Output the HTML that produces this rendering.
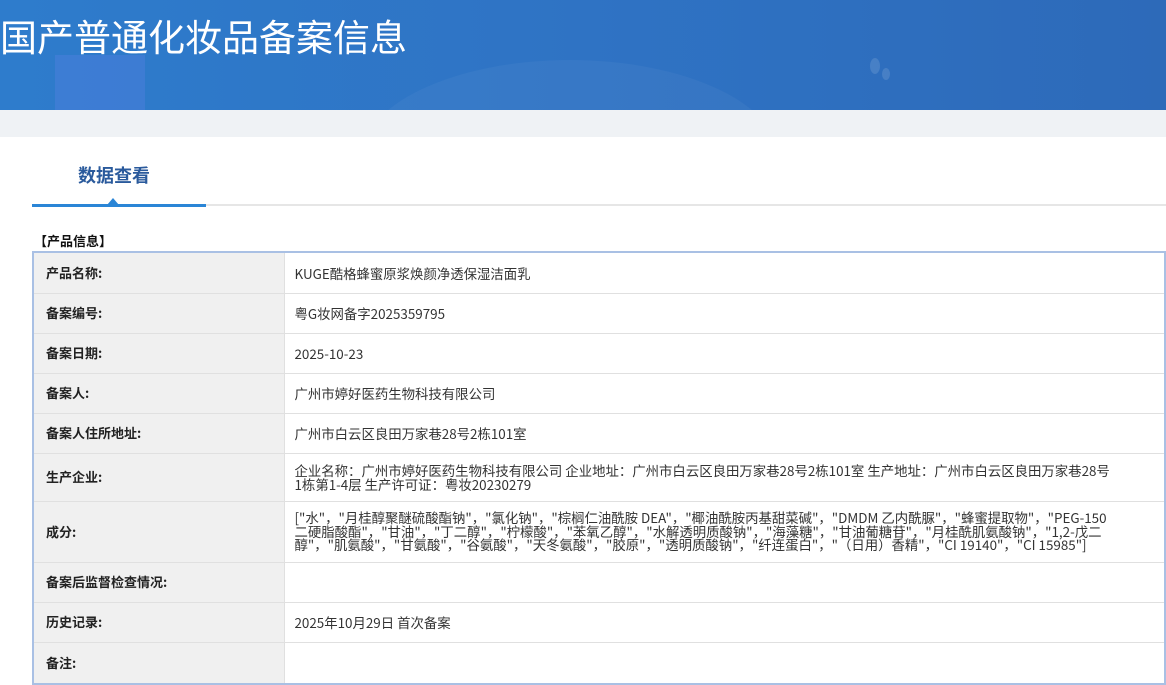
<!DOCTYPE html>
<html><head><meta charset="utf-8"><style>
*{margin:0;padding:0;box-sizing:border-box}
body{width:1166px;height:684px;overflow:hidden;background:#fff;font-family:"Noto Sans CJK SC","Liberation Sans",sans-serif;color:#333}
.hd{position:absolute;left:0;top:0;width:1166px;height:110px;background:linear-gradient(90deg,#2e7ccc 0%,#2f73c4 50%,#2d6ab9 100%);overflow:hidden}
.hd .s1{position:absolute;left:55px;top:55px;width:90px;height:60px;background:rgba(90,130,230,.35)}
.hd .c1{position:absolute;left:360px;top:60px;width:420px;height:200px;border-radius:50%;background:rgba(255,255,255,.04)}
.hd .c2{position:absolute;left:870px;top:58px;width:10px;height:16px;border-radius:50%;background:rgba(255,255,255,.12)}
.hd .c3{position:absolute;left:882px;top:68px;width:8px;height:12px;border-radius:50%;background:rgba(255,255,255,.12)}
.hd h1{position:absolute;left:0;top:10px;font-size:37px;line-height:50px;font-weight:normal;color:#fff;letter-spacing:0}
.band{position:absolute;left:0;top:110px;width:1166px;height:27px;background:#eff2f5}
.tab{position:absolute;left:78px;top:162px;font-size:18px;line-height:26px;font-weight:bold;color:#2a5a9c}
.tl{position:absolute;left:32px;top:204px;width:1134px;height:2px;background:#e6e6e6}
.tb{position:absolute;left:32px;top:204px;width:174px;height:3px;background:#2a85d6}
.tri{position:absolute;left:107px;top:198px;width:0;height:0;border-left:6px solid transparent;border-right:6px solid transparent;border-bottom:7px solid #2a85d6}
.sec{position:absolute;left:34px;top:232px;font-size:13px;line-height:18px;font-weight:bold;color:#111}
table{position:absolute;left:32px;top:251px;width:1134px;border-collapse:collapse;border:2px solid #a9c0e4;font-size:13.4px}
td{border:1px solid #e0e0e0;vertical-align:middle}
td.l{width:251px;background:#f0f0f0;font-weight:bold;padding-left:12px;color:#222;line-height:14px;font-size:13px}
td.v{padding:0 20px 0 10px;line-height:14px;color:#333}
</style></head><body>
<div class="hd"><div class="s1"></div><div class="c1"></div><div class="c2"></div><div class="c3"></div><h1>国产普通化妆品备案信息</h1></div>
<div class="band"></div>
<div class="tab">数据查看</div>
<div class="tl"></div><div class="tb"></div><div class="tri"></div>
<div class="sec">【产品信息】</div>
<table>
<tr style="height:41px"><td class="l">产品名称:</td><td class="v">KUGE酷格蜂蜜原浆焕颜净透保湿洁面乳</td></tr>
<tr style="height:40px"><td class="l">备案编号:</td><td class="v">粤G妆网备字2025359795</td></tr>
<tr style="height:40px"><td class="l">备案日期:</td><td class="v">2025-10-23</td></tr>
<tr style="height:40px"><td class="l">备案人:</td><td class="v">广州市婷好医药生物科技有限公司</td></tr>
<tr style="height:40px"><td class="l">备案人住所地址:</td><td class="v">广州市白云区良田万家巷28号2栋101室</td></tr>
<tr style="height:48px"><td class="l">生产企业:</td><td class="v" style="white-space:nowrap">企业名称：广州市婷好医药生物科技有限公司 企业地址：广州市白云区良田万家巷28号2栋101室 生产地址：广州市白云区良田万家巷28号<br>1栋第1-4层 生产许可证：粤妆20230279</td></tr>
<tr style="height:61px"><td class="l">成分:</td><td class="v" style="line-height:13.5px;white-space:nowrap">["水"，"月桂醇聚醚硫酸酯钠"，"氯化钠"，"棕榈仁油酰胺 DEA"，"椰油酰胺丙基甜菜碱"，"DMDM 乙内酰脲"，"蜂蜜提取物"，"PEG-150<br>二硬脂酸酯"，"甘油"，"丁二醇"，"柠檬酸"，"苯氧乙醇"，"水解透明质酸钠"，"海藻糖"，"甘油葡糖苷"，"月桂酰肌氨酸钠"，"1,2-戊二<br>醇"，"肌氨酸"，"甘氨酸"，"谷氨酸"，"天冬氨酸"，"胶原"，"透明质酸钠"，"纤连蛋白"，"（日用）香精"，"CI 19140"，"CI 15985"]</td></tr>
<tr style="height:40px"><td class="l">备案后监督检查情况:</td><td class="v"></td></tr>
<tr style="height:40px"><td class="l">历史记录:</td><td class="v">2025年10月29日 首次备案</td></tr>
<tr style="height:42px"><td class="l">备注:</td><td class="v"></td></tr>
</table>
</body></html>
